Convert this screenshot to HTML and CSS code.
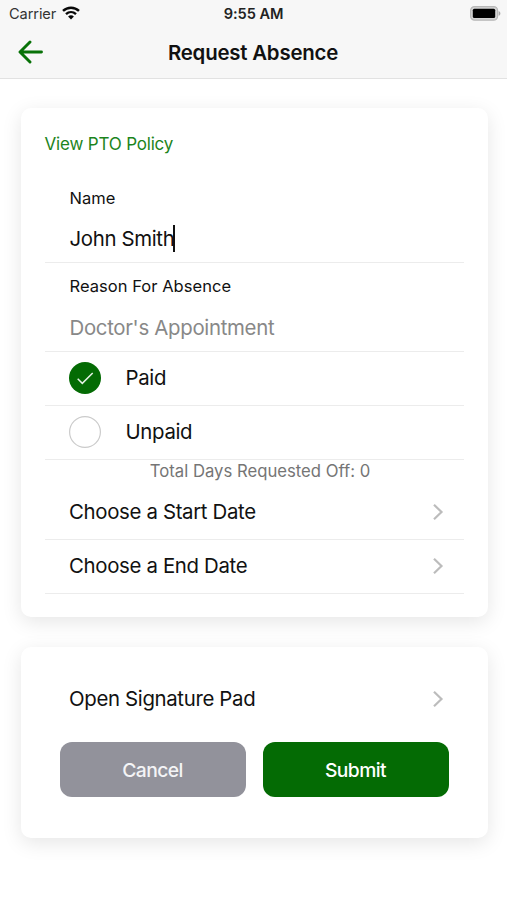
FILE: index.html
```
<!DOCTYPE html>
<html lang="en">
<head>
<meta charset="utf-8">
<meta name="viewport" content="width=device-width, initial-scale=1">
<title>Request Absence</title>
<link rel="stylesheet" href="styles.css">
</head>
<body>
<header class="header">
  <div class="status">
    <div class="carrier"><span>Carrier</span>
      <svg class="wifi" width="18" height="14" viewBox="0 0 18 14" fill="none" stroke="#080808" stroke-width="2.4"><path d="M1 4.9C5.5.6 12.5.6 17 4.9M4 8.1c2.9-2.7 7.1-2.7 10 0"/><path d="M9 13.4 6.1 10.4c1.7-1.5 4.1-1.5 5.8 0z" fill="#080808" stroke="none"/></svg>
    </div>
    <span class="time">9:55 AM</span>
    <svg class="battery" width="31" height="15" viewBox="0 0 31 15"><rect x=".6" y=".6" width="27" height="13.6" rx="4" fill="#d4d4d4" stroke="#b8b8b8" stroke-width="1.2"/><rect x="2.8" y="2.8" width="22.4" height="9.2" rx="1.5" fill="#000"/><path d="M28.6 5c2.4.8 2.4 4 0 4.8z" fill="#a8a8a8"/></svg>
  </div>
  <div class="toolbar">
    <svg class="back" width="26" height="24" viewBox="0 0 26 24" fill="none" stroke="#087208" stroke-width="2.9" stroke-linecap="round" stroke-linejoin="round"><path d="M12 2 2 12l10 10M2.5 12H23.5"/></svg>
    <h1 class="title">Request Absence</h1>
  </div>
</header>
<main class="content">
  <section class="card request">
    <a class="policy">View PTO Policy</a>
    <div class="field name-field">
      <label class="label">Name</label>
      <div class="value"><span>John Smith</span><i class="caret"></i></div>
    </div>
    <div class="field">
      <label class="label reason">Reason For Absence</label>
      <div class="value placeholder">Doctor's Appointment</div>
    </div>
    <div class="row">
      <svg class="radio" width="32" height="32" viewBox="0 0 32 32" fill="none"><circle cx="16" cy="16" r="16" fill="#046b04"/><path d="M8.7 16.8 13.3 21.4 23.7 11" stroke="#e5f1e5" stroke-width="1.5"/></svg>
      <span>Paid</span>
    </div>
    <div class="row">
      <svg class="radio" width="32" height="32" viewBox="0 0 32 32" fill="none"><circle cx="16" cy="16" r="15.4" stroke="#cbcbcb" stroke-width="1.2"/></svg>
      <span>Unpaid</span>
    </div>
    <p class="total">Total Days Requested Off: 0</p>
    <div class="row link">
      <span>Choose a Start Date</span>
      <svg class="chevron" width="12" height="18" viewBox="0 0 12 18"><path d="m2 1.7 7.5 7.3L2 16.3"/></svg>
    </div>
    <div class="row link">
      <span>Choose a End Date</span>
      <svg class="chevron" width="12" height="18" viewBox="0 0 12 18"><path d="m2 1.7 7.5 7.3L2 16.3"/></svg>
    </div>
  </section>
  <section class="card signature">
    <div class="row link last">
      <span>Open Signature Pad</span>
      <svg class="chevron" width="12" height="18" viewBox="0 0 12 18"><path d="m2 1.7 7.5 7.3L2 16.3"/></svg>
    </div>
    <div class="actions">
      <button class="button cancel">Cancel</button>
      <button class="button submit">Submit</button>
    </div>
  </section>
</main>
</body>
</html>
```
FILE: styles.css
```
* { box-sizing: border-box; }
body {
  margin: 0;
  height: 900px;
  background: #fff;
  color: #111;
  font-family: Inter, "Liberation Sans", sans-serif;
  font-size: 20.4px;
  overflow: hidden;
}
svg { display: block; flex: none; }
span { white-space: nowrap; }
.header {
  height: 79px;
  background: #f7f7f7;
  border-bottom: 1px solid #e2e2e2;
}
.status {
  display: grid;
  grid-template-columns: 1fr auto 1fr;
  align-items: center;
  height: 27px;
  padding: 0 6px 0 9px;
  font-size: 14.6px;
}
.carrier { display: flex; align-items: center; gap: 6px; color: #333; letter-spacing: -.1px; }
.wifi { margin-top: -2px; }
.time { margin-left: -3px; font-weight: 600; color: #222; letter-spacing: -.05px; }
.battery { justify-self: end; }
.toolbar {
  display: grid;
  grid-template-columns: 26px 1fr 26px;
  align-items: center;
  height: 50px;
  padding: 0 19px 0 18px;
}
.title {
  margin: 1px 0 0;
  text-align: center;
  font-size: 20.4px;
  font-weight: 600;
  letter-spacing: -.2px;
  white-space: nowrap;
}
.content {
  display: flex;
  flex-direction: column;
  gap: 30px;
  padding: 29px 19.5px 0 20.5px;
}
.card {
  background: #fff;
  border-radius: 10px;
  box-shadow: 0 5px 20px rgba(0, 0, 0, .1);
}
.request { height: 509px; padding: 24px 24px 0; }
.signature { height: 191px; padding: 25px 24px 0; }
.policy {
  display: block;
  height: 24px;
  line-height: 24px;
  font-size: 17px;
  letter-spacing: -.18px;
  color: #1c841c;
}
.field {
  height: 88.5px;
  padding: 11px 0 0 25px;
  border-bottom: 1.5px solid #ececec;
}
.name-field { height: 107px; padding-top: 30px; }
.label { display: block; height: 24px; line-height: 24px; font-size: 16.5px; }
.reason { letter-spacing: .04px; }
.value { display: flex; align-items: center; height: 28px; margin-top: 14px; letter-spacing: -.34px; }
.placeholder { margin-top: 15px; color: #888; letter-spacing: -.31px; }
.caret { width: 2px; height: 27px; margin-left: -1px; background: #111; }
.row {
  display: flex;
  align-items: center;
  gap: 24.5px;
  height: 54px;
  padding-left: 24.5px;
  border-bottom: 1.5px solid #ececec;
  letter-spacing: -.34px;
}
.row span { padding-bottom: 2px; }
.link { justify-content: space-between; padding-right: 19.5px; }
.last { border-bottom: 0; }
.chevron { fill: none; stroke: #bcbcbc; stroke-width: 2.2; }
.total {
  height: 26px;
  margin: 0;
  padding-left: 12px;
  text-align: center;
  line-height: 23px;
  font-size: 16.7px;
  color: #757575;
}
.actions { display: flex; gap: 17px; padding: 16px 15px 0; }
.button {
  flex: 1;
  height: 55px;
  border: 0;
  border-radius: 12px;
  padding: 0;
  color: #fff;
  font: 500 19.3px Inter, sans-serif;
  letter-spacing: -.55px;
}
.cancel { background: #92929b; color: #f4f4f6; }
.submit { background: #046b04; }
```
